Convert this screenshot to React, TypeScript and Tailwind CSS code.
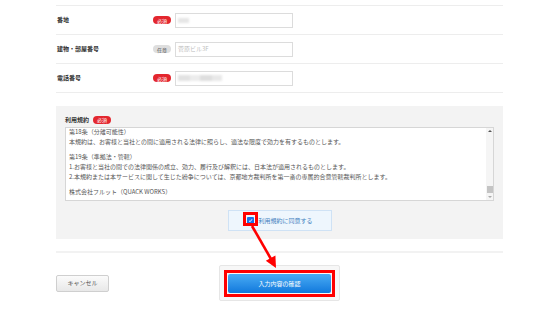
import React from "react";

const font = { fontFamily: '"Noto Sans CJK JP", "Noto Sans", sans-serif' };

function Badge({ req }: { req: boolean }) {
  return (
    <span
      className={
        req
          ? "inline-flex items-center justify-center w-[18px] h-[8px] rounded-full bg-[#e3262e] text-white text-[5px] leading-none"
          : "inline-flex items-center justify-center w-[18px] h-[8px] rounded-full bg-[#dedede] text-[#555] text-[5px] leading-none"
      }
    >
      {req ? "必須" : "任意"}
    </span>
  );
}

function Row({ label, req, children }: { label: string; req: boolean; children?: React.ReactNode }) {
  return (
    <div className="flex items-center h-[29px] border-b border-[#ededed]">
      <div className="w-[97px] pl-[1px] text-[6px] font-bold text-[#333] leading-none">{label}</div>
      <Badge req={req} />
      <div className="ml-[4px] w-[118px] h-[15px] border border-[#dcdcdc] bg-white flex items-center pl-[2px]">
        {children}
      </div>
    </div>
  );
}

export default function App() {
  return (
    <div className="relative w-[560px] h-[330px] bg-white overflow-hidden" style={font}>
      <div className="ml-[56px] w-[447px] pt-[5px]">
        <div className="border-t border-[#ededed]">
          <Row label="番地" req>
            <span className="block w-[11px] h-[5px] bg-[#e6e6e6] blur-[1px]" />
          </Row>
          <Row label="建物・部屋番号" req={false}>
            <span className="text-[6px] text-[#bdbdbd] leading-none">菅原ビル3F</span>
          </Row>
          <Row label="電話番号" req>
            <span className="flex items-center blur-[1px]">
              <span className="block w-[12px] h-[6px] bg-[#e2e2e2]" />
              <span className="block w-[10px] h-[6px] bg-[#ececec]" />
              <span className="block w-[12px] h-[6px] bg-[#dedede]" />
              <span className="block w-[10px] h-[6px] bg-[#e8e8e8]" />
            </span>
          </Row>
        </div>

        <div className="mt-[13px] bg-[#f3f3f3] h-[133px] px-[9px] pt-[10px]">
          <div className="flex items-center h-[7px] mb-[4px]">
            <span className="text-[6px] font-bold text-[#333] leading-none w-[28px]">利用規約</span>
            <Badge req />
          </div>
          <div className="relative h-[74px] border border-[#d6d6d6] bg-white overflow-hidden">
            <div className="pl-[3px] pr-[10px] -mt-[1px] text-[6px] leading-[10px] text-[#555] whitespace-nowrap">
              <div className="mb-[5px]">
                <div>第18条（分離可能性）</div>
                <div>本規約は、お客様と当社との間に適用される法律に照らし、適法な限度で効力を有するものとします。</div>
              </div>
              <div className="mb-[5px]">
                <div>第19条（準拠法・管轄）</div>
                <div>1.お客様と当社の間での法律関係の成立、効力、履行及び解釈には、日本法が適用されるものとします。</div>
                <div>2.本規約または本サービスに関して生じた紛争については、京都地方裁判所を第一審の専属的合意管轄裁判所とします。</div>
              </div>
              <div>株式会社フルット（QUACK WORKS）</div>
            </div>
            <div className="absolute right-0 top-0 bottom-0 w-[7px] bg-[#f5f5f5] flex flex-col items-center justify-between">
              <span className="mt-[2px] w-0 h-0 border-l-[2px] border-r-[2px] border-b-[2px] border-l-transparent border-r-transparent border-b-[#555]" />
              <div className="flex flex-col items-center">
                <span className="w-[6px] h-[7px] bg-[#c4c4c4] mb-[3px]" />
                <span className="mb-[2px] w-0 h-0 border-l-[2px] border-r-[2px] border-t-[2px] border-l-transparent border-r-transparent border-t-[#aaa]" />
              </div>
            </div>
          </div>
          <div className="flex justify-center mt-[9px]">
            <div className="relative w-[104px] h-[21px] bg-[#eef6fd] border border-[#cfe2f5] flex items-center pl-[18px]">
              <span className="w-[7px] h-[7px] rounded-[1px] bg-[#1a73e8] flex items-center justify-center">
                <svg width="5" height="5" viewBox="0 0 10 10">
                  <path d="M2 5.5 L4.2 7.5 L8 2.5" stroke="white" strokeWidth="1.8" fill="none" />
                </svg>
              </span>
              <span className="ml-[5px] text-[6px] text-[#3f7fc0] leading-none">利用規約に同意する</span>
              <span className="absolute left-[14px] top-[1px] w-[15px] h-[14px] border-[3px] border-[#ff0000]" />
            </div>
          </div>
        </div>

        <div className="mt-[12px] h-[2px] bg-[#f2f2f2]" />

        <div className="mt-[12px] grid grid-cols-[1fr_auto_1fr] items-center">
          <div className="justify-self-start">
            <div className="w-[53px] h-[17px] rounded-[2px] border border-[#cfcfcf] bg-gradient-to-b from-[#fbfbfb] to-[#e8e8e8] flex items-center justify-center text-[6px] text-[#555] leading-none">
              キャンセル
            </div>
          </div>
          <div className="w-[121px] h-[36px] bg-[#f7f7f7] border border-[#e6e6e6] rounded-[2px] p-[4px]">
            <div className="w-[111px] h-[27px] border-[3px] border-[#ff0000] p-[1px]">
              <div className="w-full h-full rounded-[2px] bg-gradient-to-b from-[#48acf4] to-[#0d78dc] flex items-center justify-center text-[6px] text-white leading-none">
                入力内容の確認
              </div>
            </div>
          </div>
          <div />
        </div>
      </div>

      <svg className="absolute left-0 top-0 pointer-events-none" width="560" height="330">
        <line x1="252" y1="226" x2="271" y2="259" stroke="#ff0000" strokeWidth="2.6" />
        <polygon points="276,268 265.8,260.8 275.4,255.6" fill="#ff0000" />
      </svg>
    </div>
  );
}
